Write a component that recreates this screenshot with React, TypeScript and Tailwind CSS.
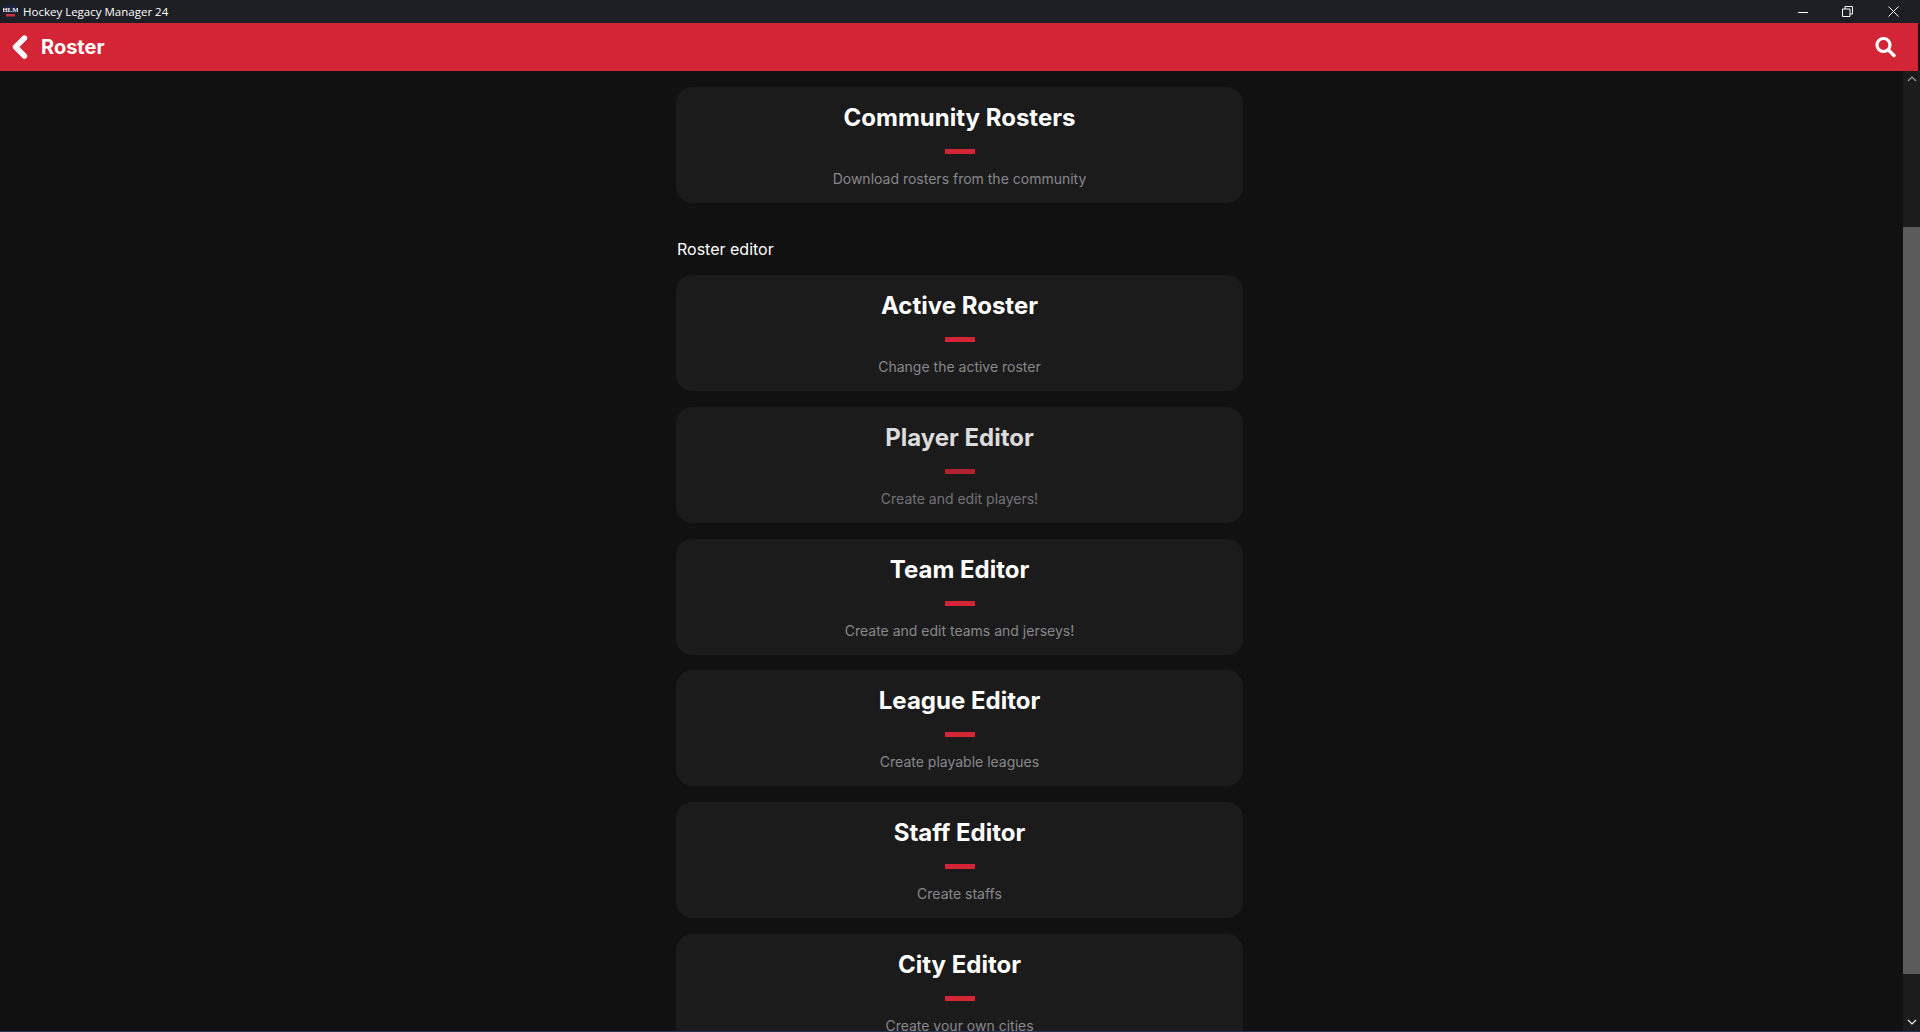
import { ChevronLeft } from "lucide-react";

const editors = [
  { title: "Active Roster", sub: "Change the active roster" },
  { title: "Player Editor", sub: "Create and edit players!", dim: true },
  { title: "Team Editor", sub: "Create and edit teams and jerseys!" },
  { title: "League Editor", sub: "Create playable leagues" },
  { title: "Staff Editor", sub: "Create staffs" },
  { title: "City Editor", sub: "Create your own cities" },
];

function MenuCard({ title, sub, dim }: { title: string; sub: string; dim?: boolean }) {
  return (
    <div className="flex h-[116px] w-[567px] shrink-0 flex-col items-center rounded-[16px] bg-[#1b1b1c] pt-[13px]">
      <div className={`text-[24px] font-bold leading-[36px] ${dim ? "text-[#dcdcdc]" : "text-white"}`}>{title}</div>
      <div className={`mt-[13px] h-[5px] w-[30px] ${dim ? "bg-[#b3212f]" : "bg-[#d32535]"}`} />
      <div className={`mt-[15px] text-[14px] leading-[20px] ${dim ? "text-[#737376]" : "text-[#88888b]"}`}>{sub}</div>
    </div>
  );
}

export default function App() {
  return (
    <div className="flex h-[1032px] flex-col overflow-hidden border-b border-[#26324f] bg-[#111112] font-['Inter',sans-serif]">
      {/* window title bar */}
      <div className="flex h-[23px] shrink-0 items-center bg-[#1d1f24] pl-[3px] text-white">
        <svg width="15" height="15" viewBox="0 0 15 15" className="shrink-0">
          <rect x="1" y="1" width="13" height="8" fill="#1b2440" />
          <text x="7.500" y="8" textAnchor="middle" fontSize="7" fontWeight="700" fontFamily="Liberation Serif, serif" fill="#eef0f6">HLM</text>
          <rect x="3" y="10" width="9" height="2.500" fill="#c9303f" />
        </svg>
        <span className="ml-[5px] font-['Open_Sans',sans-serif] text-[11.5px] leading-none">Hockey Legacy Manager 24</span>
        <div className="ml-auto flex items-center">
          <svg width="10" height="10" viewBox="0 0 10 10" className="mr-[34px]">
            <path d="M0 5.5h10" stroke="#fff" strokeWidth="1" />
          </svg>
          <svg width="11" height="11" viewBox="0 0 11 11" className="mr-[35px]">
            <path d="M.5 3h7.500v7.500H.5z M3 3V.5h7.500V8H8" fill="none" stroke="#fff" strokeWidth="1" />
          </svg>
          <svg width="11" height="11" viewBox="0 0 11 11" className="mr-[21px]">
            <path d="M.5.5l10 10M10.500.5l-10 10" stroke="#fff" strokeWidth="1" />
          </svg>
        </div>
      </div>

      {/* app bar */}
      <div className="flex h-[48px] shrink-0 items-center border-r-2 border-[#15161a] bg-[#d32535] pr-[12px] text-white">
        <ChevronLeft size={36} strokeWidth={3.6} className="ml-[2px]" />
        <span className="ml-[3px] text-[20px] font-bold">Roster</span>
        <svg width="22" height="22" viewBox="0 0 22 22" className="ml-auto mr-[10px]" fill="none" stroke="#fff">
          <circle cx="9.500" cy="9" r="6.500" strokeWidth="3.200" />
          <path d="M14.500 14l5.500 5.500" strokeWidth="3.400" strokeLinecap="round" />
        </svg>
      </div>

      <div className="flex min-h-0 flex-1">
        <main className="flex min-w-0 flex-1 flex-col items-center overflow-hidden pl-[16px] pt-[16px]">
          <MenuCard title="Community Rosters" sub="Download rosters from the community" />
          <div className="mt-[34px] mb-[14px] w-[567px] pl-[1px] text-[16px] leading-[24px] text-white">Roster editor</div>
          <div className="flex flex-col gap-[15.75px]">
            {editors.map((e) => (
              <MenuCard key={e.title} {...e} />
            ))}
          </div>
        </main>

        {/* scrollbar */}
        <div className="flex w-[17px] shrink-0 flex-col items-center bg-[#1c1c1d]">
          <svg width="10" height="6" viewBox="0 0 10 6" className="mt-[5px]">
            <path d="M1 5l4-4 4 4" fill="none" stroke="#9a9a9a" strokeWidth="1.200" />
          </svg>
          <div className="mt-[145px] h-[747px] w-full bg-[#5b5b5c]" />
          <svg width="10" height="6" viewBox="0 0 10 6" className="mt-[45px]">
            <path d="M1 1l4 4 4-4" fill="none" stroke="#f0f0f0" strokeWidth="1.200" />
          </svg>
        </div>
      </div>
    </div>
  );
}
